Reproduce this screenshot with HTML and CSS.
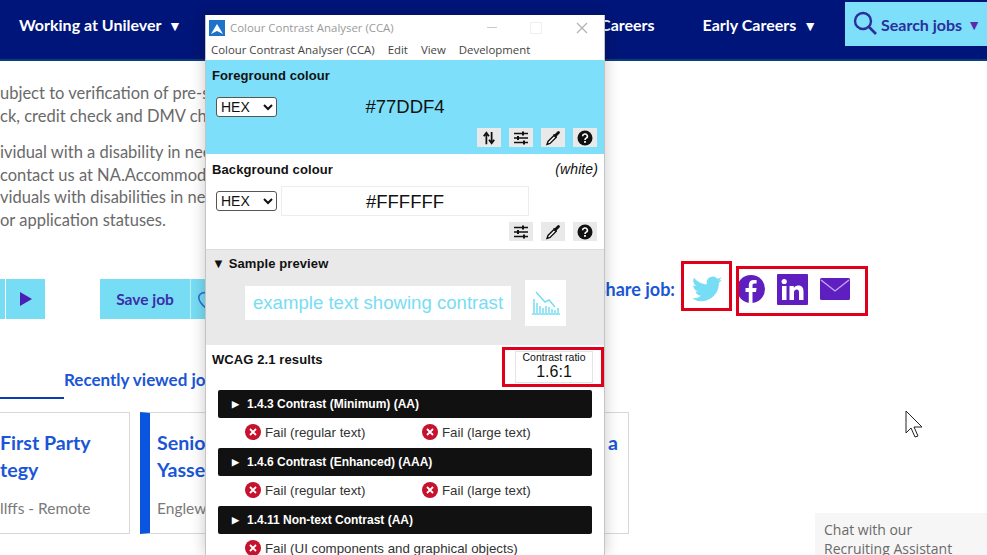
FILE: index.html
```html
<!DOCTYPE html>
<html lang="en">
<head>
  <meta charset="utf-8">
  <title>Colour Contrast Analyser over job page</title>
  <link rel="stylesheet" href="styles.css">
</head>
<body>
  <svg class="defs" width="0" height="0" aria-hidden="true">
    <symbol id="i-sliders" viewBox="0 0 16 16">
      <path d="M1 3.5h14M1 8h14M1 12.5h14" stroke="#111" stroke-width="1.5"/>
      <path d="M9 1.5h2v4H9zM4 6h2v4H4zM10 10.5h2v4h-2z" fill="#111"/>
    </symbol>
    <symbol id="i-drop" viewBox="0 0 16 16">
      <path d="M2 14.5l1-3 6-6 2 2-6 6z" fill="#fff" stroke="#111" stroke-width="1.4"/>
      <path d="M8 4.5l2-.5 2.5-2.5a1.4 1.4 0 0 1 2 2L12 6l-.5 2z" fill="#111"/>
    </symbol>
    <symbol id="i-help" viewBox="0 0 16 16">
      <circle cx="8" cy="8" r="7.5" fill="#111"/>
      <path d="M5.6 6.2a2.4 2.2 0 1 1 3.6 1.9c-.8.5-1.2.9-1.2 1.8" fill="none" stroke="#fff" stroke-width="1.6"/>
      <rect x="7.1" y="11" width="1.8" height="1.8" fill="#fff"/>
    </symbol>
    <symbol id="i-fail" viewBox="0 0 16 16">
      <circle cx="8" cy="8" r="8" fill="#c4122f"/>
      <path d="M5 5l6 6M11 5l-6 6" stroke="#fff" stroke-width="1.8"/>
    </symbol>
  </svg>

  <header class="nav">
    <a class="nav-item nav-first">Working at Unilever <span class="caret">&#9660;</span></a>
    <a class="nav-item nav-mid">Experienced Careers</a>
    <a class="nav-item nav-early">Early Careers <span class="caret">&#9660;</span></a>
    <a class="nav-search">
      <svg width="26" height="26" viewBox="0 0 26 26"><circle cx="11" cy="10" r="8" fill="none" stroke="#2a2f9b" stroke-width="2.4"/><path d="M17 16l7 7" stroke="#2a2f9b" stroke-width="2.6"/></svg>
      <span>Search jobs</span>
      <span class="caret-small">&#9660;</span>
    </a>
  </header>

  <main class="page">
    <p class="copy">ubject to verification of pre-sc<br>ck, credit check and DMV chec</p>
    <p class="copy">ividual with a disability in nee<br>contact us at NA.Accommoda<br>viduals with disabilities in nee<br>or application statuses.</p>

    <div class="actions">
      <div class="pager">
        <span class="pager-cut"></span>
        <span class="pager-btn"><svg width="12" height="14" viewBox="0 0 12 14"><path d="M0 0l12 7-12 7z" fill="#4a1fb8"/></svg></span>
      </div>
      <div class="save">
        <span class="save-label">Save job</span>
        <span class="save-heart"><svg width="14" height="20" viewBox="0 0 14 20"><path d="M8 4c2-2 6-1 6 2v8l-6 5C3 15 0 11 1 7c1-3 5-4 7-3z" fill="none" stroke="#2a6fd6" stroke-width="1.6"/></svg></span>
      </div>
      <div class="share">
        <span class="share-label">Share job:</span>
        <svg class="tw" width="30" height="26" viewBox="0 0 24 20"><path d="M24 2.4c-.9.4-1.8.7-2.8.8 1-.6 1.8-1.6 2.2-2.7-1 .6-2 1-3.1 1.200A4.900 4.900 0 0 0 11.900 6.200C7.800 6 4.200 4 1.700.9a4.900 4.900 0 0 0 1.500 6.600c-.8 0-1.600-.2-2.200-.6 0 2.400 1.700 4.400 3.900 4.900-.7.2-1.500.2-2.200.1.600 2 2.400 3.400 4.600 3.400A9.900 9.900 0 0 1 0 17.300 13.900 13.900 0 0 0 21.500 5c1-.7 1.800-1.600 2.500-2.600z" fill="#77ddf4"/></svg>
        <svg class="fb" width="28" height="28" viewBox="0 0 28 28"><circle cx="14" cy="14" r="14" fill="#5f1fc0"/><path d="M15.500 28V17h3.500l.6-4h-4.100v-2.400c0-1.200.5-2 2.100-2h2V5.100c-.8-.1-1.800-.2-2.800-.2-3.200 0-5 1.900-5 5.200V13H8.500v4h3.300v11z" fill="#fff"/></svg>
        <svg class="li" width="31" height="31" viewBox="0 0 31 31"><rect width="31" height="31" rx="1" fill="#5f1fc0"/><rect x="5" y="12" width="4.500" height="14" fill="#fff"/><circle cx="7.200" cy="7.500" r="2.600" fill="#fff"/><path d="M12.500 12h4.300v2c.8-1.400 2.400-2.400 4.500-2.400 3.800 0 5.200 2.400 5.200 6.100V26H22v-7.300c0-1.900-.6-3.100-2.300-3.100-1.800 0-2.700 1.300-2.700 3.100V26h-4.500z" fill="#fff"/></svg>
        <svg class="ml" width="30" height="22" viewBox="0 0 30 22"><rect width="30" height="22" rx="1.500" fill="#5f1fc0"/><path d="M1 2l14 11L29 2" fill="none" stroke="#c9a8f5" stroke-width="1.300"/></svg>
      </div>
    </div>

    <div class="tabs">
      <span class="tab-active"></span>
      <span class="tab">Recently viewed jobs</span>
    </div>

    <div class="cards">
      <article class="card card-cut">
        <h3>First Party<br>tegy</h3>
        <p>llffs - Remote</p>
      </article>
      <article class="card card-marked">
        <h3>Senior Manager<br>Yassen</h3>
        <p>Englewood Cliffs</p>
      </article>
      <article class="card card-last">
        <h3 class="card-end">a</h3>
      </article>
    </div>
  </main>

  <aside class="chat">Chat with our<br>Recruiting Assistant</aside>

  <!-- mouse pointer -->
  <svg class="cursor" width="19" height="28" viewBox="0 0 19 28"><path d="M1 1v22l5-5 4 9 3-1-4-9h8z" fill="#fff" stroke="#222" stroke-width="1"/></svg>

  <!-- CCA window sits on top of the page -->
  <section class="cca">
    <div class="cca-title">
      <svg width="16" height="16" viewBox="0 0 16 16"><rect width="16" height="16" fill="#1e73c8"/><path d="M2 14L8 4l6 10-6-3z" fill="#fff"/></svg>
      <span class="cca-name">Colour Contrast Analyser (CCA)</span>
      <span class="cca-min"></span>
      <span class="cca-max"></span>
      <svg class="cca-close" width="12" height="12" viewBox="0 0 12 12"><path d="M1 1l10 10M11 1L1 11" stroke="#b5b5b5" stroke-width="1.400"/></svg>
    </div>
    <nav class="cca-menu">
      <span>Colour Contrast Analyser (CCA)</span><span>Edit</span><span>View</span><span>Development</span>
    </nav>

    <div class="cca-colour cca-fg">
      <div class="colour-head"><b>Foreground colour</b></div>
      <div class="colour-row">
        <select class="fmt"><option>HEX</option></select>
        <div class="hex">#77DDF4</div>
      </div>
      <div class="tools">
        <span class="tool"><svg width="14" height="14" viewBox="0 0 16 16"><path d="M5 15V4M2 6l3-4 3 4" fill="none" stroke="#111" stroke-width="2"/><path d="M11 1v11M8 10l3 4 3-4" fill="none" stroke="#111" stroke-width="2"/></svg></span>
        <span class="tool"><svg width="16" height="16"><use href="#i-sliders"/></svg></span>
        <span class="tool"><svg width="16" height="16"><use href="#i-drop"/></svg></span>
        <span class="tool"><svg width="16" height="16"><use href="#i-help"/></svg></span>
      </div>
    </div>

    <div class="cca-colour cca-bg">
      <div class="colour-head"><b>Background colour</b><i>(white)</i></div>
      <div class="colour-row">
        <select class="fmt fmt-dark"><option>HEX</option></select>
        <div class="hex hex-input">#FFFFFF</div>
      </div>
      <div class="tools">
        <span class="tool"><svg width="16" height="16"><use href="#i-sliders"/></svg></span>
        <span class="tool"><svg width="16" height="16"><use href="#i-drop"/></svg></span>
        <span class="tool"><svg width="16" height="16"><use href="#i-help"/></svg></span>
      </div>
    </div>

    <div class="cca-sample">
      <div class="sample-head"><span class="tri">&#9660;</span> Sample preview</div>
      <div class="sample-row">
        <div class="sample-text">example text showing contrast</div>
        <div class="sample-chart">
          <svg width="30" height="28" viewBox="0 0 30 28"><path d="M5 3l9 10 4-2 6 7" fill="none" stroke="#77ddf4" stroke-width="1.500"/><path d="M3 10v14M6 14v10M9 17v7M12 19v5M15 17v7M18 18v6M21 20v4M24 21v3M27 19v5" stroke="#77ddf4" stroke-width="1.500"/><path d="M1 25h28" stroke="#77ddf4" stroke-width="1.500"/></svg>
        </div>
      </div>
    </div>

    <div class="cca-results">
      <div class="results-head">
        <b>WCAG 2.1 results</b>
        <div class="ratio"><small>Contrast ratio</small><span>1.6:1</span></div>
      </div>
      <div class="rule"><span class="rule-tri">&#9654;</span>1.4.3 Contrast (Minimum) (AA)</div>
      <div class="verdicts">
        <span class="verdict"><svg width="16" height="16"><use href="#i-fail"/></svg>Fail (regular text)</span>
        <span class="verdict"><svg width="16" height="16"><use href="#i-fail"/></svg>Fail (large text)</span>
      </div>
      <div class="rule"><span class="rule-tri">&#9654;</span>1.4.6 Contrast (Enhanced) (AAA)</div>
      <div class="verdicts">
        <span class="verdict"><svg width="16" height="16"><use href="#i-fail"/></svg>Fail (regular text)</span>
        <span class="verdict"><svg width="16" height="16"><use href="#i-fail"/></svg>Fail (large text)</span>
      </div>
      <div class="rule"><span class="rule-tri">&#9654;</span>1.4.11 Non-text Contrast (AA)</div>
      <div class="verdicts">
        <span class="verdict verdict-wide"><svg width="16" height="16"><use href="#i-fail"/></svg>Fail (UI components and graphical objects)</span>
      </div>
    </div>
  </section>

  <!-- red annotation boxes -->
  <div class="mark mark-ratio"></div>
  <div class="mark mark-tw"></div>
  <div class="mark mark-social"></div>
</body>
</html>
```

FILE: styles.css
```css
html, body {
  margin: 0;
  padding: 0;
}

body {
  position: relative;
  width: 987px;
  height: 555px;
  overflow: hidden;
  background-color: #FFFFFF;
  font-family: Lato, "Open Sans", sans-serif;
  color: #6a6a6a;
}

.defs {
  position: absolute;
}

/* site header */
.nav {
  display: flex;
  align-items: flex-start;
  height: 61px;
  box-sizing: border-box;
  border-bottom: 2px solid #0b3f78;
  background-color: #00157a;
  color: #FFFFFF;
  font-size: 16px;
  font-weight: 700;
  white-space: nowrap;
}

.nav-item {
  padding-top: 15px;
}

.nav-first {
  margin-left: 19px;
}

.nav-mid {
  margin-left: auto;
  margin-right: 48px;
}

.nav-early {
  margin-right: 28px;
}

.caret {
  margin-left: 3px;
  font-size: 14px;
}

.nav-search {
  display: flex;
  align-items: center;
  gap: 3px;
  width: 142px;
  height: 44px;
  margin-top: 2px;
  box-sizing: border-box;
  padding-left: 7px;
  background-color: #7DDFFA;
  color: #2a2f9b;
  font-size: 16px;
}

.caret-small {
  margin-left: 2px;
  font-size: 14px;
  color: #5a2aa8;
}

/* page under the window */
.page {
  padding-top: 21px;
}

.copy {
  margin: 0 0 14px 0;
  font-size: 16.500px;
  line-height: 22.500px;
  white-space: nowrap;
  width: 205px;
  overflow: hidden;
}

.actions {
  display: flex;
  align-items: stretch;
  height: 40px;
  margin-top: 48px;
}

.pager {
  display: flex;
  width: 45px;
  gap: 1px;
}

.pager-cut {
  width: 5px;
  background-color: #77DDF4;
}

.pager-btn {
  display: flex;
  flex: 1;
  align-items: center;
  justify-content: center;
  background-color: #77DDF4;
}

.save {
  display: flex;
  width: 150px;
  margin-left: 55px;
  background-color: #77DDF4;
  color: #3a2fa8;
  font-size: 15.500px;
  font-weight: 700;
}

.save-label {
  display: flex;
  align-items: center;
  justify-content: center;
  width: 90px;
  border-right: 1px solid #bff0fa;
}

.save-heart {
  display: flex;
  align-items: center;
  padding-left: 7px;
}

.share {
  display: flex;
  align-items: center;
  margin-left: auto;
  margin-right: 137px;
  margin-bottom: 20px;
}

.share-label {
  margin-right: 17px;
  color: #1a56d6;
  font-size: 18px;
  font-weight: 700;
}

.fb {
  margin-left: 15px;
}

.li {
  margin-left: 12px;
}

.ml {
  margin-left: 12px;
}

.tabs {
  display: flex;
  align-items: flex-start;
  height: 30px;
  margin-top: 50px;
}

.tab-active {
  width: 64px;
  height: 30px;
  box-sizing: border-box;
  border-bottom: 2px solid #0a3fb0;
}

.tab {
  color: #1a56d6;
  font-size: 17px;
  font-weight: 700;
  line-height: 22px;
  white-space: nowrap;
}

.cards {
  display: flex;
  gap: 10px;
  height: 122px;
  margin-top: 13px;
  width: 629px;
}

.card {
  box-sizing: border-box;
  border: 1px solid #d8d8d8;
  white-space: nowrap;
  overflow: hidden;
}

.card h3 {
  margin: 16px 0 0 0;
  color: #1a56d6;
  font-size: 19.600px;
  line-height: 27px;
  font-weight: 700;
}

.card p {
  margin: 15px 0 0 0;
  font-size: 15.500px;
  line-height: 20px;
  color: #7a7a7a;
}

.card-cut {
  width: 130px;
  border-left: 0;
}

.card-marked {
  width: 245px;
  border-left: 10px solid #0a55e0;
  padding-left: 7px;
}

.card-last {
  flex: 1;
  padding-left: 212px;
}

.chat {
  position: absolute;
  left: 815px;
  top: 513px;
  width: 172px;
  height: 42px;
  box-sizing: border-box;
  padding: 7px 0 0 9px;
  background-color: #f6f6f6;
  font-family: "Open Sans", sans-serif;
  font-size: 14px;
  line-height: 19px;
  color: #6a6a6a;
}

.cursor {
  position: absolute;
  left: 905px;
  top: 410px;
}

/* contrast analyser window */
.cca {
  position: absolute;
  left: 205px;
  top: 15px;
  display: flex;
  flex-direction: column;
  box-sizing: border-box;
  width: 400px;
  height: 540px;
  border-left: 1px solid #c4c4c4;
  border-right: 1px solid #c4c4c4;
  box-shadow: 0 0 14px rgba(0, 0, 0, 0.22);
  background-color: #FFFFFF;
  font-family: "Liberation Sans", Arial, sans-serif;
  color: #111111;
  font-size: 13px;
}

.cca-title {
  display: flex;
  align-items: center;
  height: 25px;
  flex: none;
  padding: 0 16px 0 3px;
  font-family: "Open Sans", sans-serif;
  font-size: 11.400px;
  color: #9a9a9a;
  white-space: nowrap;
}

.cca-name {
  margin-left: 5px;
}

.cca-min {
  width: 10px;
  height: 1px;
  margin-left: auto;
  background-color: #c8c8c8;
}

.cca-max {
  width: 10px;
  height: 10px;
  margin-left: 33px;
  border: 1px solid #f0f0f0;
}

.cca-close {
  margin-left: 34px;
}

.cca-menu {
  display: flex;
  align-items: center;
  flex: none;
  gap: 13px;
  height: 20px;
  box-sizing: border-box;
  padding: 0 0 2px 5px;
  font-family: "Open Sans", sans-serif;
  font-size: 11.400px;
  color: #444444;
  white-space: nowrap;
}

.cca-colour {
  display: flex;
  flex-direction: column;
  flex: none;
  box-sizing: border-box;
  padding: 8px 6px 0 6px;
}

.cca-fg {
  height: 94px;
  background-color: #7DDFFA;
}

.cca-bg {
  height: 96px;
  border-bottom: 1px solid #dcdcdc;
}

.colour-head {
  display: flex;
  justify-content: space-between;
  line-height: 15px;
  letter-spacing: 0.1px;
}

.colour-head i {
  font-size: 14px;
}

.colour-row {
  display: flex;
  align-items: center;
  height: 30px;
  margin-top: 9px;
  padding-left: 4px;
}

.fmt {
  width: 61px;
  height: 20px;
  padding: 0;
  border: 1px solid #555;
  border-radius: 3px;
  background-color: #FFFFFF;
  font-family: "Liberation Sans", Arial, sans-serif;
  font-size: 14px;
  color: #111111;
}

.hex {
  width: 248px;
  margin-left: 4px;
  text-align: center;
  font-size: 18.500px;
}

.hex-input {
  height: 30px;
  line-height: 30px;
  border: 1px solid #ececec;
  box-sizing: border-box;
}

.tools {
  display: flex;
  justify-content: flex-end;
  gap: 8px;
  margin-top: 6px;
  padding-right: 1px;
}

.tool {
  display: flex;
  align-items: center;
  justify-content: center;
  width: 24px;
  height: 19px;
  background-color: #e9e9e9;
}

.cca-sample {
  display: flex;
  flex-direction: column;
  flex: none;
  height: 95px;
  box-sizing: border-box;
  padding: 6px 6px 0 6px;
  background-color: #e9e9e9;
}

.sample-head {
  font-weight: 700;
  line-height: 15px;
  letter-spacing: 0.1px;
}

.tri {
  font-size: 13px;
}

.sample-row {
  display: flex;
  align-items: center;
  gap: 14px;
  margin-top: 9px;
  margin-left: 33px;
}

.sample-text {
  width: 266px;
  height: 34px;
  background-color: #FFFFFF;
  color: #77DDF4;
  font-size: 18.600px;
  line-height: 33px;
  text-align: center;
  white-space: nowrap;
}

.sample-chart {
  display: flex;
  align-items: center;
  justify-content: center;
  width: 41px;
  height: 46px;
  background-color: #FFFFFF;
}

.cca-results {
  flex: 1;
  padding: 0 12px;
  overflow: hidden;
}

.results-head {
  display: flex;
  justify-content: space-between;
  height: 45px;
  padding-top: 7px;
  box-sizing: border-box;
  margin-left: -6px;
  line-height: 15px;
  letter-spacing: 0.1px;
}

.ratio {
  display: flex;
  flex-direction: column;
  align-items: center;
  box-sizing: border-box;
  width: 78px;
  height: 32px;
  margin-top: -1px;
  margin-right: -1px;
  border: 1px solid #e4e4e4;
  letter-spacing: 0;
}

.ratio small {
  font-size: 10.500px;
  line-height: 11px;
}

.ratio span {
  font-size: 16px;
  line-height: 17px;
}

.rule {
  display: flex;
  align-items: center;
  height: 28px;
  background-color: #111111;
  border-radius: 2px;
  color: #FFFFFF;
  font-size: 12px;
  font-weight: 700;
}

.rule-tri {
  width: 29px;
  padding-left: 14px;
  box-sizing: border-box;
  font-size: 9px;
}

.verdicts {
  display: flex;
  align-items: center;
  height: 30px;
  box-sizing: border-box;
  padding: 0 0 2px 27px;
  color: #333333;
  font-size: 13.300px;
}

.verdict {
  display: flex;
  flex: none;
  align-items: center;
  gap: 4px;
  width: 177px;
  white-space: nowrap;
}

.verdict svg {
  flex: none;
}

.verdict-wide {
  width: auto;
}

/* red boxes drawn on the screenshot */
.mark {
  position: absolute;
  box-sizing: border-box;
  border: 3px solid #e0001b;
}

.mark-ratio {
  left: 502px;
  top: 347px;
  width: 102px;
  height: 40px;
}

.mark-tw {
  left: 681px;
  top: 261px;
  width: 51px;
  height: 50px;
}

.mark-social {
  left: 736px;
  top: 266px;
  width: 132px;
  height: 50px;
}
```
